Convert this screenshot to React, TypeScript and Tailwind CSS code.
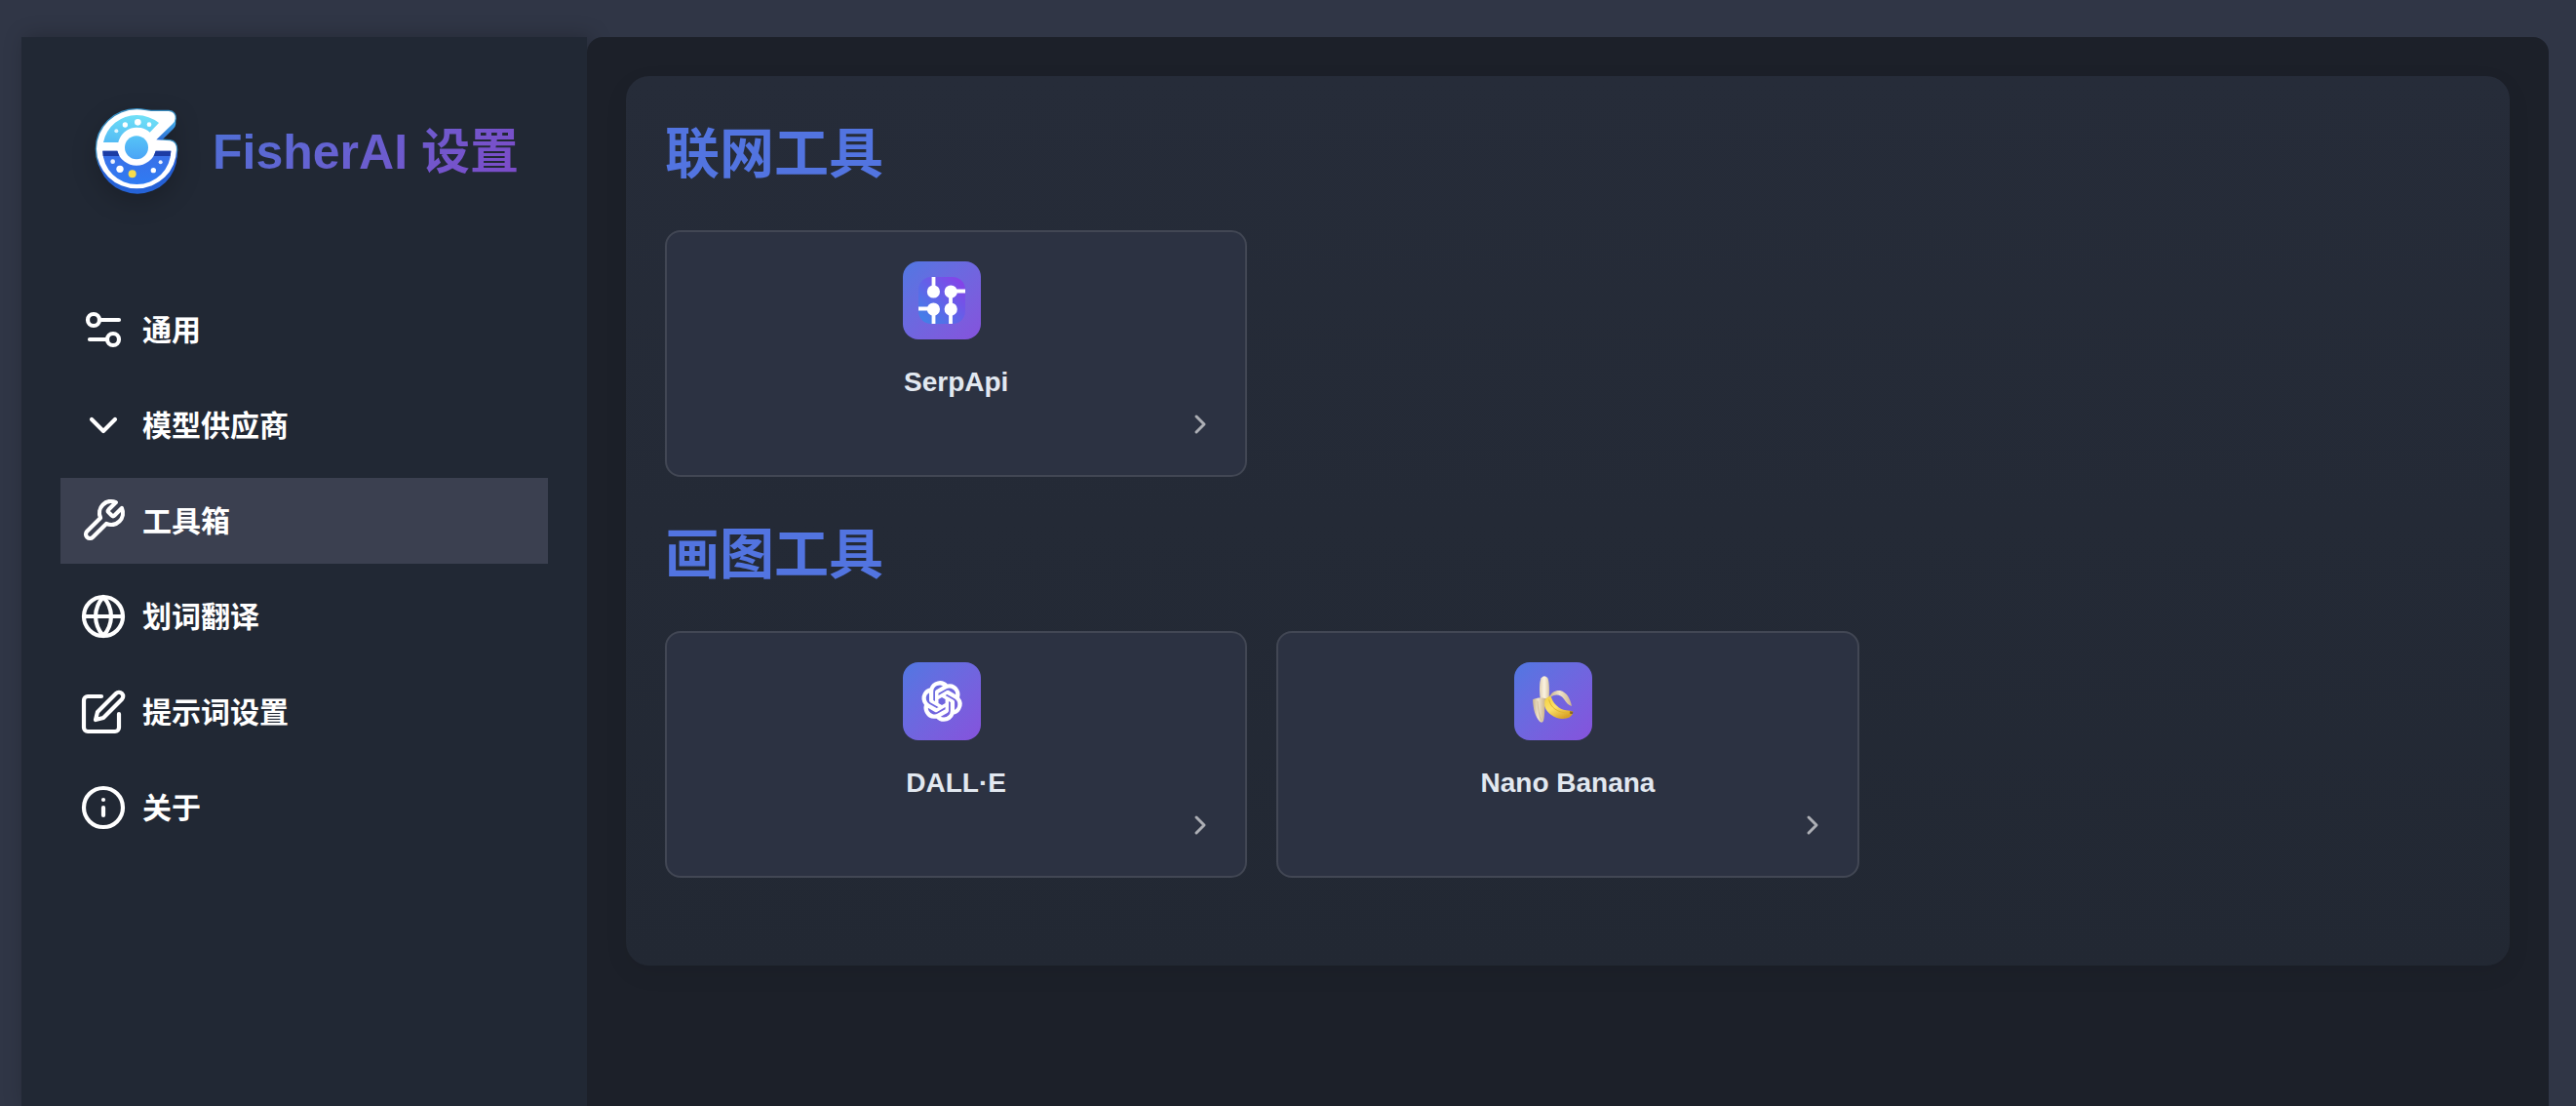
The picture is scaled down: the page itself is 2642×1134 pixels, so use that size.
import type { ReactNode } from "react";
import { SiOpenai } from "react-icons/si";

function StrokeIcon({ children }: { children: ReactNode }) {
  return (
    <svg
      viewBox="0 0 24 24"
      fill="none"
      stroke="currentColor"
      strokeWidth="2.1"
      strokeLinecap="round"
      strokeLinejoin="round"
      aria-hidden="true"
      className="size-12 shrink-0"
    >
      {children}
    </svg>
  );
}

const navItems: { label: string; active?: boolean; icon: ReactNode }[] = [
  {
    label: "通用",
    icon: (
      <>
        <path d="M20 7h-9" />
        <path d="M14 17H5" />
        <circle cx="17" cy="17" r="3" />
        <circle cx="7" cy="7" r="3" />
      </>
    ),
  },
  { label: "模型供应商", icon: <path d="m6 9 6 6 6-6" /> },
  {
    label: "工具箱",
    active: true,
    icon: (
      <path d="M14.7 6.3a1 1 0 0 0 0 1.4l1.6 1.6a1 1 0 0 0 1.4 0l3.77-3.77a6 6 0 0 1-7.94 7.94l-6.91 6.91a2.12 2.12 0 0 1-3-3l6.91-6.91a6 6 0 0 1 7.94-7.94l-3.76 3.76z" />
    ),
  },
  {
    label: "划词翻译",
    icon: (
      <>
        <circle cx="12" cy="12" r="10" />
        <path d="M2 12h20" />
        <path d="M12 2a15.3 15.3 0 0 1 4 10 15.3 15.3 0 0 1-4 10 15.3 15.3 0 0 1-4-10 15.3 15.3 0 0 1 4-10z" />
      </>
    ),
  },
  {
    label: "提示词设置",
    icon: (
      <>
        <path d="M11 4H4a2 2 0 0 0-2 2v14a2 2 0 0 0 2 2h14a2 2 0 0 0 2-2v-7" />
        <path d="M18.5 2.5a2.121 2.121 0 0 1 3 3L12 15l-4 1 1-4 9.5-9.5z" />
      </>
    ),
  },
  {
    label: "关于",
    icon: (
      <>
        <circle cx="12" cy="12" r="10" />
        <path d="M12 16v-4" />
        <path d="M12 8h.01" />
      </>
    ),
  },
];

const logoOutline =
  "M184 67C202 67 214 71 228 72L282 72Q303 74 302 95Q301 104 294 111L244 160L286 163Q306 166 306 190A122 120 0 0 1 184 310A124 122 0 0 1 60 188A124 121 0 0 1 184 67Z";

function Logo() {
  return (
    <svg
      viewBox="39 48 288 288"
      aria-hidden="true"
      className="size-24 shrink-0 drop-shadow-[0_8px_12px_rgba(0,0,0,0.2)]"
    >
      <defs>
        <linearGradient id="logo-edge" x1="0" y1="0" x2="0" y2="1">
          <stop offset="0" stopColor="#4cc3ee" />
          <stop offset="0.4" stopColor="#2458cf" />
          <stop offset="1" stopColor="#2563d8" />
        </linearGradient>
        <linearGradient id="logo-top" x1="0.6" y1="0" x2="0.3" y2="1">
          <stop offset="0" stopColor="#6fe0f7" />
          <stop offset="1" stopColor="#55bdf4" />
        </linearGradient>
        <linearGradient id="logo-bottom" x1="0" y1="0" x2="0" y2="1">
          <stop offset="0" stopColor="#3b6fe6" />
          <stop offset="1" stopColor="#2f7bf3" />
        </linearGradient>
        <linearGradient id="logo-core" x1="0" y1="0" x2="0" y2="1">
          <stop offset="0" stopColor="#56c4f7" />
          <stop offset="1" stopColor="#4aa4f6" />
        </linearGradient>
      </defs>
      <path d={logoOutline} fill="#3fb2ea" stroke="#3fa8e6" strokeWidth="8" opacity="0.8" />
      <path d={logoOutline} fill="url(#logo-edge)" transform="translate(2 16)" />
      <path d={logoOutline} fill="#fff" />
      <path d="M81 168A104 104 0 0 1 184 84Q222 85 252 108L224 137A59 59 0 0 0 127 168Z" fill="url(#logo-top)" />
      <path d="M79 194H124A61 61 0 0 0 242 194H289A105 103 0 0 1 79 194Z" fill="url(#logo-bottom)" />
      <path d="M79 194H124L130 210H80ZM242 194H289L287 210H236Z" fill="#1c3ca4" />
      <circle cx="183" cy="184" r="36" fill="url(#logo-core)" />
      <g fill="#fff">
        <circle cx="187" cy="106" r="10" />
        <circle cx="148" cy="114" r="8" />
        <circle cx="222" cy="113" r="7" />
        <circle cx="121" cy="133" r="6" opacity="0.8" />
        <circle cx="132" cy="250" r="11" />
        <circle cx="110" cy="227" r="7" opacity="0.9" />
        <circle cx="235" cy="254" r="8" />
        <circle cx="257" cy="229" r="6" opacity="0.9" />
      </g>
      <circle cx="170" cy="265" r="12" fill="#f7dc4c" />
    </svg>
  );
}

function SerpApiLogo() {
  return (
    <svg viewBox="0 0 48 48" aria-hidden="true" className="size-12">
      <defs>
        <linearGradient id="serp-bg" x1="0" y1="1" x2="1" y2="0">
          <stop offset="0" stopColor="#3b86e8" />
          <stop offset="1" stopColor="#8b3de8" />
        </linearGradient>
      </defs>
      <rect width="48" height="48" rx="13" fill="url(#serp-bg)" />
      <path d="M15.5 0V15M33 15V48M33 14.5H48M0 32.5H15M15.5 33V48" stroke="#fff" strokeWidth="3.8" />
      <g fill="#fff">
        <circle cx="15.4" cy="15" r="6.6" />
        <circle cx="33.2" cy="15" r="6.6" />
        <circle cx="15.4" cy="33" r="6.6" />
        <circle cx="33.2" cy="33" r="6.6" />
      </g>
    </svg>
  );
}

function BananaLogo() {
  return (
    <svg viewBox="69 57 240 240" aria-hidden="true" className="size-20">
      <defs>
        <linearGradient id="banana-skin" x1="0" y1="0" x2="0.6" y2="1">
          <stop offset="0" stopColor="#f3cf3a" />
          <stop offset="0.55" stopColor="#fbe069" />
          <stop offset="1" stopColor="#d9a227" />
        </linearGradient>
        <linearGradient id="banana-peel" x1="0" y1="0" x2="1" y2="0">
          <stop offset="0" stopColor="#c9b48c" />
          <stop offset="0.45" stopColor="#efe3cb" />
          <stop offset="1" stopColor="#cdb58c" />
        </linearGradient>
        <linearGradient id="banana-flesh" x1="0" y1="0" x2="1" y2="0">
          <stop offset="0" stopColor="#e3d3b4" />
          <stop offset="0.5" stopColor="#fbf3e2" />
          <stop offset="1" stopColor="#dac7a4" />
        </linearGradient>
      </defs>
      <path d="M149 168C146 145 146 118 152 106Q161 94 172 105C178 120 177 146 176 170Z" fill="url(#banana-flesh)" />
      <path d="M163 171C168 166 174 166 181 158C187 184 207 201 229 205Q243 206 250 209Q249 219 240 226C222 235 200 232 183 219C169 208 161 195 161 182Z" fill="url(#banana-skin)" />
      <path d="M176 172C181 196 201 213 238 213" fill="none" stroke="#e3b52e" strokeWidth="3" />
      <path d="M240 208L250 209L249 216L241 216Z" fill="#8a6a1e" />
      <path d="M178 166C182 150 195 143 210 144C231 149 242 170 246 192C236 189 229 181 222 170C212 156 199 155 189 160Z" fill="url(#banana-peel)" />
      <path d="M126 172C138 166 152 166 163 168C162 190 165 215 159 238Q155 245 148 240C134 227 127 200 126 172Z" fill="url(#banana-peel)" />
      <path d="M141 176C142 198 145 220 152 236" fill="none" stroke="#c4ae83" strokeWidth="2" />
    </svg>
  );
}

function ToolCard({ name, logo }: { name: string; logo: ReactNode }) {
  return (
    <a
      href="#"
      className="flex flex-col rounded-2xl border-2 border-[#424754] bg-[#2c3242] px-[30px] pt-[30px] pb-[29px]"
    >
      <span className="mr-[30px] mb-6 flex size-20 items-center justify-center self-center rounded-[16px] bg-linear-135 from-[#5077e2] to-[#8552dc]">
        {logo}
      </span>
      <span className="text-center text-[28px] leading-10 font-bold text-[#e2e8f0]">{name}</span>
      <span className="flex h-[46px] items-center justify-end">
        <svg
          viewBox="0 0 24 24"
          fill="none"
          stroke="#adafb5"
          strokeWidth="2.25"
          strokeLinecap="round"
          strokeLinejoin="round"
          aria-hidden="true"
          className="size-8"
        >
          <path d="m9 18 6-6-6-6" />
        </svg>
      </span>
    </a>
  );
}

function ToolSection({ title, children }: { title: string; children: ReactNode }) {
  return (
    <section className="mb-10">
      <h2 className="mb-[38px] text-[56px] leading-[80px] font-bold text-[#5274e0]">{title}</h2>
      <div className="grid grid-cols-3 gap-[30px]">{children}</div>
    </section>
  );
}

export default function App() {
  return (
    <div className="flex min-h-screen bg-[#303646] pt-[38px] pr-7 pl-[22px] font-['Liberation_Sans','Noto_Sans_CJK_SC',sans-serif]">
      <aside className="w-[580px] shrink-0 bg-[#212834] p-10 shadow-[4px_0_20px_rgba(0,0,0,0.25)]">
        <header className="mb-16 flex items-center justify-center gap-[30px] py-7">
          <Logo />
          <h1 className="bg-linear-135 from-[#4c70d6] to-[#7d4ac8] bg-clip-text pt-1 text-[50px] leading-[60px] font-bold whitespace-nowrap text-transparent">
            FisherAI 设置
          </h1>
        </header>
        <nav aria-label="设置">
          <ul className="flex flex-col gap-[10px]">
            {navItems.map((item) => (
              <li key={item.label}>
                <a
                  href="#"
                  aria-current={item.active ? "page" : undefined}
                  className={
                    item.active
                      ? "flex h-[88px] items-center gap-4 bg-[#3b4050] px-5 text-[30px] font-bold text-white"
                      : "flex h-[88px] items-center gap-4 px-5 text-[30px] font-bold text-white"
                  }
                >
                  <StrokeIcon>{item.icon}</StrokeIcon>
                  {item.label}
                </a>
              </li>
            ))}
          </ul>
        </nav>
      </aside>

      <main className="relative flex-1 rounded-t-2xl bg-[#1c2029] p-10">
        <div className="rounded-3xl bg-linear-to-b from-[#262c39] to-[#222833] px-10 pt-10 pb-[50px] shadow-[0_8px_24px_rgba(0,0,0,0.07)]">
          <ToolSection title="联网工具">
            <ToolCard name="SerpApi" logo={<SerpApiLogo />} />
          </ToolSection>
          <ToolSection title="画图工具">
            <ToolCard
              name="DALL·E"
              logo={
                <SiOpenai
                  aria-hidden="true"
                  className="size-10 overflow-visible stroke-white stroke-1 text-white"
                />
              }
            />
            <ToolCard name="Nano Banana" logo={<BananaLogo />} />
          </ToolSection>
        </div>
      </main>
    </div>
  );
}
